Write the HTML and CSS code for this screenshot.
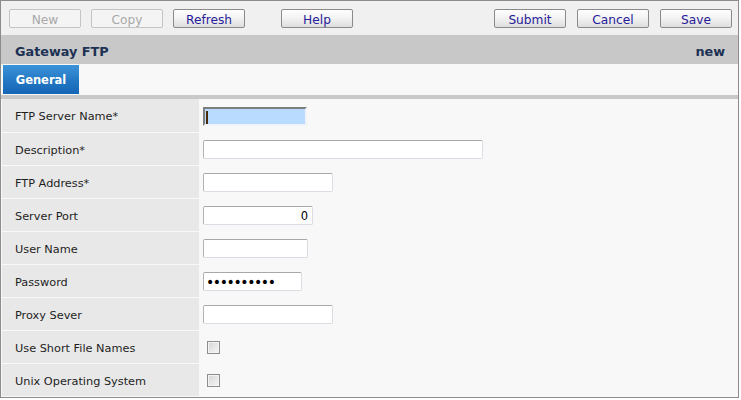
FILE: index.html
```html
<!DOCTYPE html>
<html>
<head>
<meta charset="utf-8">
<title>Gateway FTP</title>
<link rel="stylesheet" href="styles.css">
</head>
<body>
<div class="app">
  <div class="toolbar">
    <div class="btn-group">
      <button class="btn" disabled>New</button>
      <button class="btn" disabled>Copy</button>
      <button class="btn">Refresh</button>
      <button class="btn btn-help">Help</button>
    </div>
    <div class="btn-group btn-group-right">
      <button class="btn">Submit</button>
      <button class="btn">Cancel</button>
      <button class="btn">Save</button>
    </div>
  </div>
  <div class="titlebar">
    <span class="title">Gateway FTP</span>
    <span class="status">new</span>
  </div>
  <div class="tabs">
    <div class="tab tab-active">General</div>
  </div>
  <div class="band"></div>
  <div class="form">
    <div class="row row-first">
      <div class="label">FTP Server Name*</div>
      <div class="value"><input class="field field-focus w104" type="text"></div>
    </div>
    <div class="row">
      <div class="label">Description*</div>
      <div class="value"><input class="field w280" type="text"></div>
    </div>
    <div class="row">
      <div class="label">FTP Address*</div>
      <div class="value"><input class="field w130" type="text"></div>
    </div>
    <div class="row">
      <div class="label">Server Port</div>
      <div class="value"><input class="field w110 num" type="text" value="0"></div>
    </div>
    <div class="row">
      <div class="label">User Name</div>
      <div class="value"><input class="field w105" type="text"></div>
    </div>
    <div class="row">
      <div class="label">Password</div>
      <div class="value"><input class="field w99 pw" type="password" value="xxxxxxxxxx"></div>
    </div>
    <div class="row">
      <div class="label">Proxy Sever</div>
      <div class="value"><input class="field w130" type="text"></div>
    </div>
    <div class="row">
      <div class="label">Use Short File Names</div>
      <div class="value"><input class="check" type="checkbox"></div>
    </div>
    <div class="row row-last">
      <div class="label">Unix Operating System</div>
      <div class="value"><input class="check" type="checkbox"></div>
    </div>
  </div>
</div>
</body>
</html>
```

FILE: styles.css
```css
* { box-sizing: border-box; }
html, body { margin: 0; padding: 0; background: #ffffff; }
body { font-family: "DejaVu Sans", Verdana, sans-serif; }

.app {
  width: 739px;
  height: 398px;
  border: 1px solid #8c8c8c;
  background: #f8f8f8;
  display: flex;
  flex-direction: column;
  overflow: hidden;
}

.toolbar {
  height: 34px;
  background: #f0f0f0;
  display: flex;
  justify-content: space-between;
  align-items: flex-start;
  padding: 8px 6px 0 8px;
}
.btn-group { display: flex; gap: 10px; }
.btn-group-right { gap: 11px; }
.btn-help { margin-left: 26px; }

.btn {
  width: 72px;
  height: 19px;
  padding: 0;
  border: 1px solid #8a8a8a;
  border-radius: 2px;
  background: linear-gradient(#fdfdfd 0%, #f4f4f4 45%, #dedede 100%);
  color: #27209a;
  font-family: "DejaVu Sans", Verdana, sans-serif;
  font-size: 12.2px;
  line-height: 18px;
  padding-top: 1px;
  text-align: center;
}
.btn:disabled {
  border-color: #c4c4c4;
  background: #f4f4f4;
  color: #a8a8a8;
}

.titlebar {
  height: 29px;
  background: #c8c8c8;
  display: flex;
  justify-content: space-between;
  align-items: center;
  padding: 3px 13px 0 14px;
  color: #1c3153;
  font-weight: bold;
  font-size: 12.8px;
}

.tabs {
  height: 31px;
  display: flex;
  padding: 1px 0 0 2px;
  background: #f8f8f8;
}
.tab {
  width: 76px;
  height: 29px;
  display: flex;
  align-items: center;
  justify-content: center;
  padding-top: 1px;
  font-weight: bold;
  font-size: 11.5px;
  color: #ffffff;
}
.tab-active {
  background: linear-gradient(#3d93d8 0%, #2277c4 55%, #1566b5 100%);
}

.band { height: 4px; background: #c8c8c8; }

.form {
  display: flex;
  flex-direction: column;
  padding-left: 1px;
}
.row {
  display: grid;
  grid-template-columns: 197px 1fr;
  height: 33px;
  border-top: 1px solid #f8f8f8;
}
.row-first { border-top: 0; }
.label {
  background: #e8e8e8;
  display: flex;
  align-items: center;
  padding: 2px 0 0 13px;
  font-size: 11.3px;
  color: #1e1e1e;
}
.value {
  display: flex;
  align-items: center;
  padding: 1px 0 0 4px;
}

.field {
  height: 19px;
  margin: 0;
  padding: 0 3px;
  border: 1px solid #dcdce4;
  border-top-color: #a8a8a8;
  border-left-color: #b4b4b4;
  border-radius: 2px;
  background: #ffffff;
  font-family: "DejaVu Sans", Verdana, sans-serif;
  font-size: 11.5px;
  color: #000;
  outline: none;
}
.field-focus {
  border: 2px solid #f0f4f8;
  border-top-color: #7e7e7e;
  border-left-color: #7e7e7e;
  border-radius: 0;
  background:
    linear-gradient(#4a2a08, #4a2a08) no-repeat 1px 2px / 2px 13px,
    #b8dbff;
}
.num { text-align: right; padding-right: 4px; }
.pw { font-size: 14px; letter-spacing: -1.4px; padding-left: 2px; }

.w104 { width: 104px; }
.w280 { width: 280px; }
.w130 { width: 130px; }
.w110 { width: 110px; }
.w105 { width: 105px; }
.w99 { width: 99px; }

.check {
  appearance: none;
  -webkit-appearance: none;
  width: 13px;
  height: 13px;
  margin: 0 0 0 4px;
  border: 1px solid #8e8e8e;
  box-shadow: inset 0 0 0 1px #f4f4f4;
  background: linear-gradient(135deg, #d4d4d4 0%, #e6e6e6 50%, #f6f6f6 100%);
}
```
